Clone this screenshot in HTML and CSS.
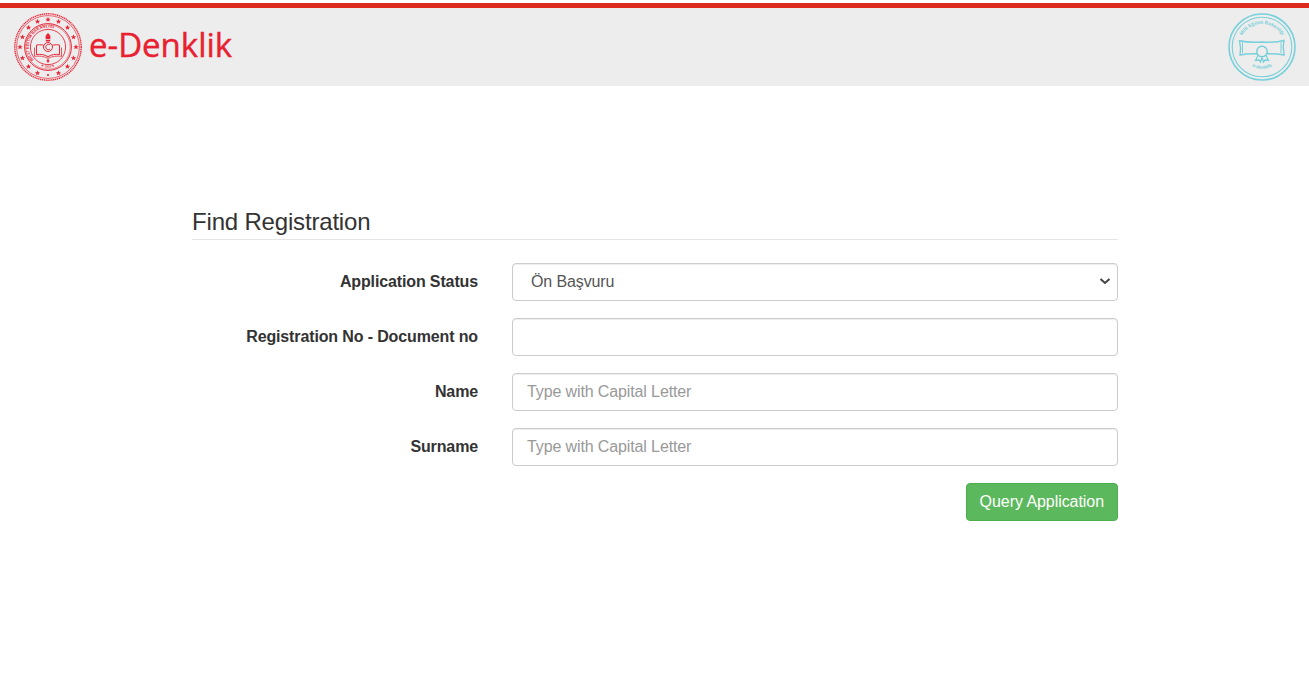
FILE: index.html
```html
<!DOCTYPE html>
<html lang="en">
<head>
<meta charset="utf-8">
<title>e-Denklik</title>
<link rel="stylesheet" href="styles.css">
</head>
<body>
<header class="topbar">
  <div class="brand">
    <svg class="seal" width="68" height="68" viewBox="0 0 68 68" aria-hidden="true">
      <defs>
        <path id="sealArc" d="M20.400 47.600a19.300 19.300 0 1 1 27.200 0"/>
        <path id="sealLow" d="M22 50.500a19.800 19.800 0 0 0 24 0"/>
        <polygon id="star" points="0,-2.700 .8,-.8 2.700,-.8 1.200,.4 1.700,2.300 0,1.200 -1.700,2.300 -1.200,.4 -2.700,-.8 -.8,-.8"/>
      </defs>
      <g fill="none" stroke="#e8283a">
        <circle cx="34" cy="34" r="33.200" stroke-width="1.400" stroke-dasharray="1.300 .6"/>
        <circle cx="34" cy="34" r="31.400" stroke-width=".7"/>
        <circle cx="34" cy="34" r="23.400" stroke-width="1"/>
        <circle cx="34" cy="34" r="22.200" stroke-width=".5"/>
        <circle cx="34" cy="34" r="17.600" stroke-width=".9"/>
      </g>
      <text class="seal-text"><textPath href="#sealArc" startOffset="1">MİLLİ EĞİTİM BAKANLIĞI</textPath></text>
      <text class="seal-text seal-low"><textPath href="#sealLow" startOffset="50%">★ 1920 ★</textPath></text>
      <g fill="#e8283a">
        <use href="#star" x="34" y="6.500"/><use href="#star" x="23.500" y="8.500"/><use href="#star" x="44.500" y="8.500"/>
        <use href="#star" x="14.500" y="14.500"/><use href="#star" x="53.500" y="14.500"/><use href="#star" x="8.500" y="24"/>
        <use href="#star" x="59.500" y="24"/><use href="#star" x="6" y="34"/><use href="#star" x="62" y="34"/>
        <use href="#star" x="8.500" y="45"/><use href="#star" x="59.500" y="45"/><use href="#star" x="14.500" y="53.500"/>
        <use href="#star" x="53.500" y="53.500"/><use href="#star" x="23.500" y="60"/><use href="#star" x="44.500" y="60"/>
        <circle cx="34" cy="62" r="1.100"/>
        <path d="M34 20c2.400 2.200 3.100 4 2.100 6h-4.200c-1-2-.3-3.800 2.100-6z"/>
        <path d="M31.400 26.800h5.200l-.8 1.800h-3.600z"/>
      </g>
      <g fill="none" stroke="#e8283a" stroke-width="1">
        <path d="M22.500 32c4-.7 8 0 11.500 2.200c3.500-2.200 7.500-2.900 11.500-2.200v9.500c-4-.5-8 0-11.500 2.200c-3.500-2.200-7.500-2.700-11.500-2.200z"/>
        <path d="M20.500 34.500v8.800c4.500-.6 9.500 0 13.500 2c4-2 9-2.600 13.500-2v-8.800" stroke-width=".8"/>
        <circle cx="34" cy="34" r="4.500" fill="#ededed"/>
        <path d="M36 31.800a2.700 2.700 0 1 0 0 4.400" stroke-width=".9"/>
        <path d="M34 45.500l-1.500 2.500 1.500 2 1.500-2z" fill="#e8283a" stroke="none"/>
      </g>
    </svg>
    <span class="wordmark">e-Denklik</span>
  </div>
  <svg class="badge" width="68" height="68" viewBox="0 0 68 68" aria-hidden="true">
    <defs>
      <path id="badgeTop" d="M11 34a23 23 0 0 1 46 0"/>
      <path id="badgeBottom" d="M20 50.500a21 21 0 0 0 28 0"/>
    </defs>
    <g fill="none" stroke="#78d0da">
      <circle cx="34" cy="34" r="33" stroke-width="1.600"/>
      <circle cx="34" cy="34" r="29.800" stroke-width="1.100"/>
      <path d="M11.500 27.800c8 1.700 16 1.700 22.500 1.200c7 .5 15 .5 22-1.500l-.8 6.500 1 8c-8-1.500-15-1.500-22.200-1c-7-.5-15-.5-22 1l.6-7z" stroke-width="1.400"/>
      <path d="M14.500 29.200v11M53 29.200v11" stroke-width="1"/>
      <circle cx="34" cy="38.500" r="5.200" fill="#ededed" stroke-width="1.500"/>
      <path d="M30 42.500l-2.500 5 3.500-.5 1.500 2 1.500-4.500 1.500 4.500 1.500-2 3.500.5-2.500-5" stroke-width="1.300"/>
    </g>
    <text class="badge-text"><textPath href="#badgeTop" startOffset="50%">Milli Eğitim Bakanlığı</textPath></text>
    <text class="badge-text"><textPath href="#badgeBottom" startOffset="50%">e-denklik</textPath></text>
  </svg>
</header>
<main class="content">
  <h1 class="title">Find Registration</h1>
  <form class="form">
    <label class="label" for="status">Application Status</label>
    <div class="select-wrap">
      <select class="control select" id="status">
        <option>Ön Başvuru</option>
      </select>
      <svg class="chevron" width="12" height="8" viewBox="0 0 12 8" aria-hidden="true">
        <path d="M1.500 2l4.500 4 4.500-4" fill="none" stroke="#444" stroke-width="2"/>
      </svg>
    </div>
    <label class="label" for="regno">Registration No - Document no</label>
    <input class="control" id="regno" type="text">
    <label class="label" for="name">Name</label>
    <input class="control" id="name" type="text" placeholder="Type with Capital Letter">
    <label class="label" for="surname">Surname</label>
    <input class="control" id="surname" type="text" placeholder="Type with Capital Letter">
    <div class="actions">
      <button class="button" type="button">Query Application</button>
    </div>
  </form>
</main>
</body>
</html>
```
FILE: styles.css
```css
* {
  box-sizing: border-box;
}

body {
  margin: 0;
  background: #fff;
  color: #333;
  font-family: "Liberation Sans", Arial, sans-serif;
  font-size: 16px;
}

.topbar {
  display: flex;
  align-items: center;
  justify-content: space-between;
  height: 83px;
  margin-top: 3px;
  padding: 0 13px 0 14px;
  background: #ededed;
  border-top: 5px solid #dc2a1f;
}

.brand {
  display: flex;
  align-items: center;
  gap: 7px;
}

.seal {
  display: block;
}

.seal-text {
  font-family: "Liberation Sans", Arial, sans-serif;
  font-size: 4.100px;
  font-weight: 700;
  fill: #e8283a;
}

.seal-low {
  text-anchor: middle;
  font-size: 3px;
}

.wordmark {
  margin-top: -5px;
  color: #e8202f;
  font-family: "Open Sans", "Noto Sans", sans-serif;
  font-size: 33px;
  line-height: 1;
  -webkit-text-stroke: .4px #e8202f;
}

.badge {
  display: block;
}

.badge-text {
  font-family: "Liberation Sans", Arial, sans-serif;
  font-size: 4.800px;
  font-weight: 700;
  fill: #78d0da;
  text-anchor: middle;
}

.content {
  width: 926px;
  margin: 0 0 0 192px;
  padding-top: 119px;
}

.title {
  height: 35px;
  margin: 0 0 23px;
  border-bottom: 1px solid #e5e5e5;
  color: #333;
  font-size: 24px;
  font-weight: 400;
  line-height: 34px;
  letter-spacing: -.18px;
}

.form {
  display: grid;
  grid-template-columns: 286px 606px;
  column-gap: 34px;
  row-gap: 17px;
  align-items: center;
}

.label {
  color: #333;
  font-size: 16px;
  font-weight: 700;
  text-align: right;
  letter-spacing: -.13px;
}

.control {
  width: 100%;
  height: 38px;
  padding: 6px 14px;
  background: #fff;
  border: 1px solid #ccc;
  border-radius: 4px;
  box-shadow: inset 0 1px 1px rgba(0, 0, 0, .075);
  color: #555;
  font-family: "Liberation Sans", Arial, sans-serif;
  font-size: 16px;
  letter-spacing: -.12px;
}

.control::placeholder {
  color: #999;
  opacity: 1;
}

.select-wrap {
  position: relative;
}

.select {
  display: block;
  padding: 4px 14px 6px 18px;
  appearance: none;
}

.chevron {
  position: absolute;
  top: 14px;
  right: 7px;
}

.actions {
  display: flex;
  grid-column: 2;
  justify-content: flex-end;
}

.button {
  height: 38px;
  padding: 6px 13px;
  background: #5cb85c;
  border: 1px solid #4cae4c;
  border-radius: 4px;
  color: #fff;
  font-family: "Liberation Sans", Arial, sans-serif;
  font-size: 16px;
  letter-spacing: -.06px;
}
```
